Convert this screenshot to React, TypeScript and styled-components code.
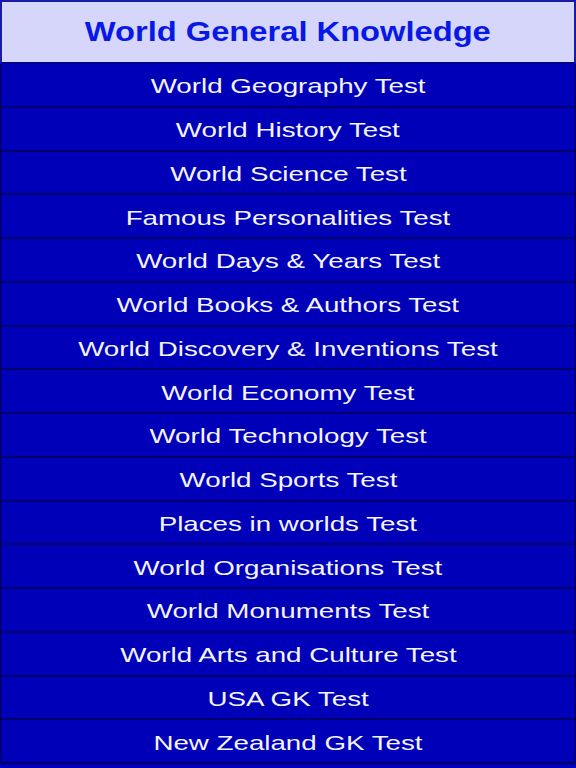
import styled, { createGlobalStyle } from 'styled-components'

const GlobalStyle = createGlobalStyle`
  html, body {
    margin: 0;
    padding: 0;
    background: #0000b8;
  }
  * { box-sizing: border-box; }
`

const Page = styled.div`
  width: 576px;
  height: 768px;
  display: flex;
  flex-direction: column;
  font-family: "Liberation Sans", Arial, sans-serif;
  overflow: hidden;
`

const Header = styled.header`
  height: 64px;
  flex: none;
  display: flex;
  align-items: center;
  justify-content: center;
  background: #d6d6fb;
  border: 2px solid #1a1aa8;
  border-bottom-color: #000090;
`

const Title = styled.h1`
  margin: 0;
  font-size: 27px;
  font-weight: 700;
  color: #0818e6;
  transform: scaleX(1.21);
`

const List = styled.ul`
  margin: 0;
  padding: 0;
  list-style: none;
  display: flex;
  flex-direction: column;
`

const Item = styled.li`
  height: 43.75px;
  flex: none;
  display: flex;
  align-items: center;
  justify-content: center;
  padding-top: 3px;
  background: #0000b8;
  border-left: 2px solid #00007a;
  border-right: 2px solid #00007a;
  border-bottom: 2px solid #00006a;
  cursor: pointer;
`

const Label = styled.span`
  color: #f4f4ff;
  font-size: 21px;
  transform: scaleX(1.32);
  white-space: nowrap;
`

const tests = [
  'World Geography Test',
  'World History Test',
  'World Science Test',
  'Famous Personalities Test',
  'World Days & Years Test',
  'World Books & Authors Test',
  'World Discovery & Inventions Test',
  'World Economy Test',
  'World Technology Test',
  'World Sports Test',
  'Places in worlds Test',
  'World Organisations Test',
  'World Monuments Test',
  'World Arts and Culture Test',
  'USA GK Test',
  'New Zealand GK Test',
]

export default function App() {
  return (
    <>
      <GlobalStyle />
      <Page>
        <Header>
          <Title>World General Knowledge</Title>
        </Header>
        <List>
          {tests.map((t) => (
            <Item key={t}>
              <Label>{t}</Label>
            </Item>
          ))}
        </List>
      </Page>
    </>
  )
}
